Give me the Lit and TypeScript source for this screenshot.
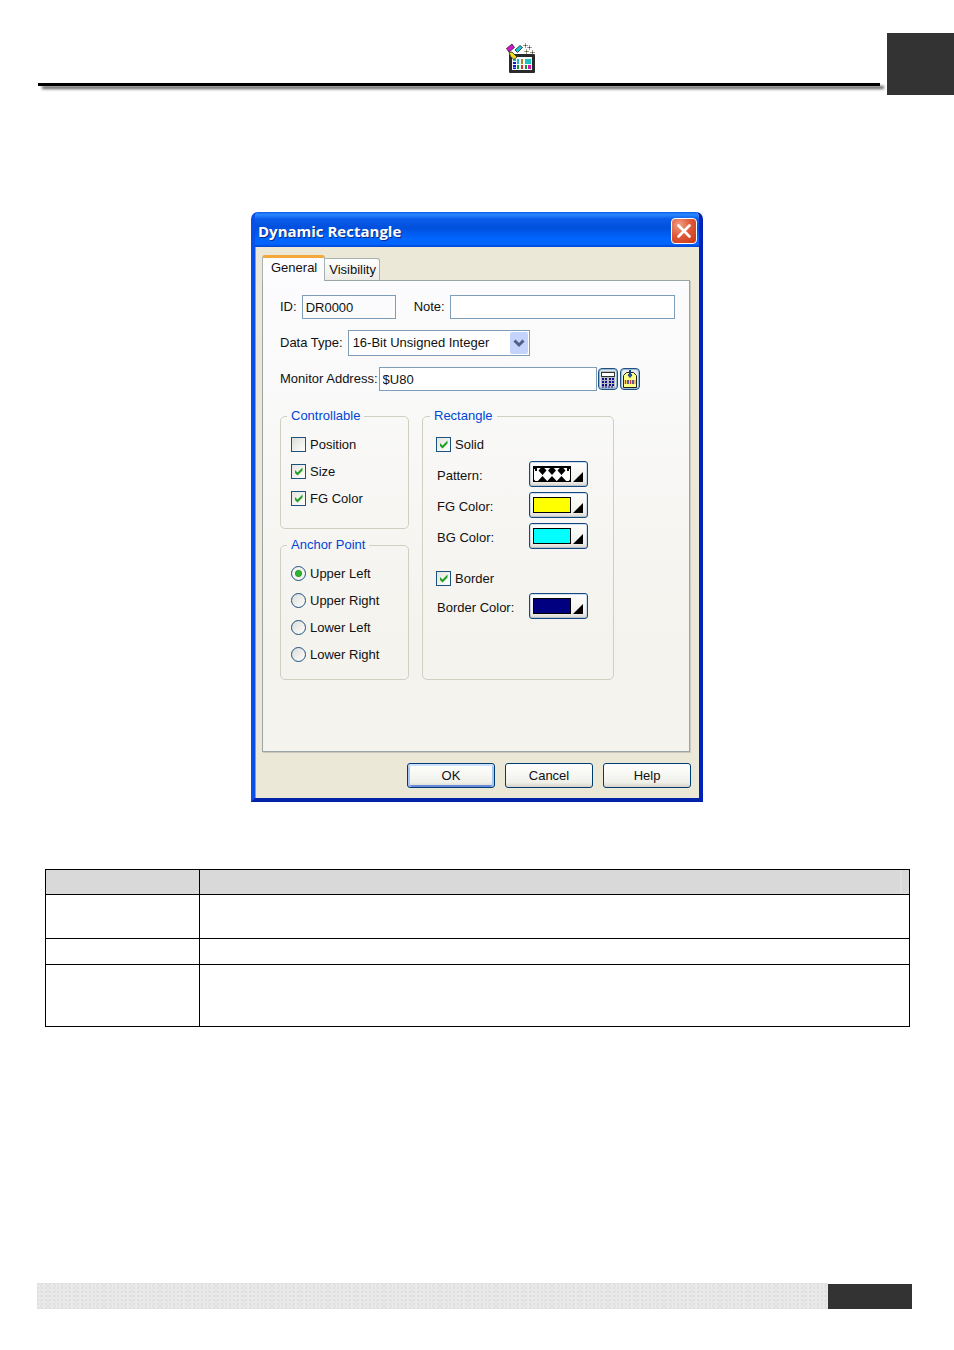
import { LitElement, html, css, svg } from "lit";
import { customElement, property } from "lit/decorators.js";
import { classMap } from "lit/directives/class-map.js";

/** Colour or pattern picker button: a swatch and a corner triangle. */
@customElement("swatch-button")
class SwatchButton extends LitElement {
  @property() label = "";
  @property() color = "";

  static styles = css`
    :host { display: block; }
    .swatch {
      width: 59px;
      height: 26px;
      padding: 0 0 0 3px;
      box-sizing: border-box;
      border: 1px solid #15487e;
      border-radius: 3px;
      background: linear-gradient(#ffffff, #f1f0eb 80%, #d9d5cb);
      box-shadow: inset 0 0 0 1px rgba(120, 160, 205, 0.35);
    }
    .art { display: block; }
  `;

  private pattern() {
    return svg`
      <rect x="0" y="1" width="38" height="16" fill="#fff"></rect>
      ${[9.5, 19, 28.5].map(
        (x) => svg`<path d="M${x} 1l4 4.500-4 4.500-4-4.500zM${x} 11l5.500 6h-11z" fill="#000"></path>`
      )}
      <path d="M0 1h38v3h-2v2h-2V3H4v3H2V4H0zM0 13l3 4H0zM38 13l-3 4h3z" fill="#000"></path>
      <rect x="0.5" y="1.5" width="37" height="15" fill="none" stroke="#000"></rect>`;
  }

  render() {
    return html`<button type="button" class="swatch" aria-label=${this.label}>
      <svg class="art" width="50" height="18" viewBox="0 0 50 18">
        ${this.color
          ? svg`<rect x="0.5" y="1.5" width="37" height="15" fill=${this.color} stroke="#000"></rect>`
          : this.pattern()}
        <path d="M50 7v10H40z" fill="#000"></path>
      </svg>
    </button>`;
  }
}

/** The "Dynamic Rectangle" property dialog. */
@customElement("property-dialog")
class PropertyDialog extends LitElement {
  static styles = css`
    :host {
      display: block;
      width: 100%;
      max-width: 452px;
      font: 13px/18px "Liberation Sans", Arial, sans-serif;
      color: #111;
    }
    button, input, select { font: inherit; color: inherit; box-sizing: border-box; margin: 0; }
    .dialog {
      background: #ebe8d7;
      border: 4px solid #0831d9;
      border-color: #0b4ee8 #0122b8 #0122a8 #0b4ee8;
      border-top: 0;
      border-radius: 7px 7px 0 0;
      overflow: hidden;
      box-shadow: inset 1px 0 #6da0f4;
    }
    .title-bar {
      display: flex;
      align-items: center;
      justify-content: space-between;
      height: 35px;
      margin: 0 -4px;
      padding: 2px 6px 0 7px;
      box-sizing: border-box;
      background: linear-gradient(#0a5fe8, #2b88ff 7%, #0a5cea 20%, #0050dc 45%, #0064ff 75%, #0064ff 92%, #0044cc);
    }
    .title {
      margin: 0;
      font: bold 15px/20px "Open Sans", "Noto Sans", sans-serif;
      color: #fff;
      text-shadow: 1px 1px #0a2a80;
    }
    .close {
      width: 26px;
      height: 26px;
      padding: 0;
      border: 1px solid #fff;
      border-radius: 4px;
      background: radial-gradient(circle at 30% 25%, #f0a084, #e0593a 45%, #c8350f);
    }
    .glyph { display: block; margin: auto; }
    .body { padding: 8px 9px 10px 7px; }
    .tabs { display: flex; align-items: flex-end; }
    .tab {
      height: 22px;
      padding: 0 3px 0 4px;
      border: 1px solid #a9b1b1;
      border-left: 0;
      border-bottom: 0;
      border-radius: 0 3px 0 0;
      background: linear-gradient(#fff, #ecebe5);
    }
    .tab.current {
      position: relative;
      height: 26px;
      margin-bottom: -1px;
      padding: 0 7px 3px 8px;
      border: 1px solid #a9b1b1;
      border-top: 3px solid #f5a83a;
      border-bottom: 0;
      border-radius: 3px 3px 0 0;
      background: #fcfcfe;
    }
    .panel {
      padding: 14px 14px 71px 17px;
      border: 1px solid #9aa4a6;
      box-shadow: 1px 1px #c9c9bd;
      background: linear-gradient(#fcfcfe, #f4f3ee 75%);
    }
    .line { display: flex; align-items: center; margin-bottom: 11px; }
    .field {
      height: 24px;
      padding: 0 3px;
      border: 1px solid #7f9db9;
      border-radius: 0;
      background: #fff;
      min-width: 0;
    }
    .id { width: 94px; margin-left: 5px; background: transparent; }
    .note-label { margin-left: 18px; }
    .note { flex: 1; margin-left: 5px; }
    .combo { position: relative; margin-left: 5px; }
    .select { display: block; appearance: none; width: 182px; height: 26px; padding: 0 4px; }
    .arrow { position: absolute; right: 2px; top: 2px; pointer-events: none; }
    .address { flex: 1; margin-left: 1px; }
    .tools { display: flex; gap: 2px; margin: 0 35px 0 1px; }
    .tool {
      width: 20px;
      height: 22px;
      padding: 0;
      border: 1px solid #1c5180;
      border-radius: 4px;
      background: #e3eaf0;
      box-shadow: inset 0 0 0 1px #9ab9d6;
    }
    .groups {
      display: grid;
      grid-template-columns: 129px 192px;
      gap: 7px 13px;
      padding-top: 5px;
    }
    .group {
      min-width: 0;
      margin: 0;
      padding: 6px 10px 11px;
      border: 1px solid #d0d0bf;
      border-radius: 5px;
    }
    .controllable { padding-bottom: 16px; }
    .rectangle { grid-column: 2; grid-row: 1 / span 2; padding-left: 13px; }
    .legend { margin-left: -4px; padding: 0 4px; color: #0046d5; }
    .rectangle .legend { margin-left: -6px; }
    .option { display: flex; align-items: center; gap: 4px; height: 27px; }
    .option.solid { margin-bottom: 2px; }
    .option.border { margin-top: 12px; }
    .mark {
      appearance: none;
      width: 15px;
      height: 15px;
      border: 1px solid #1c5180;
      background: linear-gradient(135deg, #dcdcd7, #fff);
    }
    .check:checked {
      background:
        url('data:image/svg+xml,<svg xmlns="http://www.w3.org/2000/svg" viewBox="0 0 13 13"><path d="M3 5v3l2.500 2.500L10.500 5.500v-3L5.500 7.500z" fill="%2321a121"/></svg>'),
        linear-gradient(135deg, #e4e4df, #fff);
    }
    .radio { border-radius: 50%; }
    .radio:checked { background: radial-gradient(circle, #31b431 0 2px, #21a121 3px, #f3f3f0 4px); }
    .picker {
      display: grid;
      grid-template-columns: 92px auto;
      align-items: center;
      height: 31px;
      padding-left: 1px;
    }
    .actions { display: flex; justify-content: flex-end; gap: 10px; padding-top: 11px; margin-right: -1px; }
    .action {
      width: 88px;
      height: 25px;
      padding: 0;
      border: 1px solid #003c74;
      border-radius: 3px;
      background: linear-gradient(#fff, #f0f0ea 80%, #d8d2c6);
    }
    .action.primary { box-shadow: inset 0 2px #cee0fb, inset 2px 0 #a9c4f4, inset -2px 0 #a9c4f4, inset 0 -2px #6a8ae0; }
  `;

  private option(kind: "checkbox" | "radio", text: string, checked: boolean, extra = "") {
    const marks = { mark: true, check: kind === "checkbox", radio: kind === "radio" };
    return html`<label class="option ${extra}">
      <input type=${kind} name=${kind === "radio" ? "anchor" : text} class=${classMap(marks)} .checked=${checked} />
      <span>${text}</span>
    </label>`;
  }

  private picker(text: string, color = "") {
    return html`<div class="picker">
      <span>${text}:</span>
      <swatch-button label=${text} color=${color}></swatch-button>
    </div>`;
  }

  render() {
    return html`<form class="dialog" @submit=${(e: Event) => e.preventDefault()}>
      <header class="title-bar">
        <h1 class="title">Dynamic Rectangle</h1>
        <button type="button" class="close" aria-label="Close">
          <svg class="glyph" width="24" height="24" viewBox="0 0 24 24">
            <path d="M6.5 6.5l11 11M17.5 6.5l-11 11" stroke="#fff" stroke-width="2.6" stroke-linecap="round"></path>
          </svg>
        </button>
      </header>
      <div class="body">
        <div class="tabs" role="tablist">
          <button type="button" role="tab" aria-selected="true" class="tab current">General</button>
          <button type="button" role="tab" aria-selected="false" class="tab">Visibility</button>
        </div>
        <section class="panel" role="tabpanel">
          <div class="line">
            <label for="id">ID:</label>
            <input id="id" class="field id" value="DR0000" readonly />
            <label class="note-label" for="note">Note:</label>
            <input id="note" class="field note" />
          </div>
          <div class="line">
            <label for="type">Data Type:</label>
            <div class="combo">
              <select id="type" class="field select">
                <option>16-Bit Unsigned Integer</option>
              </select>
              <svg class="arrow" width="18" height="22" viewBox="0 0 18 22">
                <rect width="18" height="22" rx="2" fill="#c3d3fb"></rect>
                <path d="M4.5 8.5l4.5 4.5 4.5-4.5" fill="none" stroke="#4d6185" stroke-width="3"></path>
              </svg>
            </div>
          </div>
          <div class="line">
            <label for="address">Monitor Address:</label>
            <input id="address" class="field address" value="$U80" />
            <div class="tools">
              <button type="button" class="tool" aria-label="Keypad">
                <svg class="glyph" width="18" height="20" viewBox="0 0 18 20">
                  <rect x="2" y="2" width="14" height="17" fill="#b9bcc0"></rect>
                  <rect x="2.5" y="3.5" width="13" height="4" fill="#fff" stroke="#333"></rect>
                  ${[9, 12, 15].map((y) =>
                    [3, 6, 10, 13].map(
                      (x) => svg`<rect x=${x} y=${y} width="2" height="2" fill="#10108c"></rect>`
                    )
                  )}
                  <path d="M3 18h12" stroke="#10108c" stroke-dasharray="2 1"></path>
                </svg>
              </button>
              <button type="button" class="tool" aria-label="Tag">
                <svg class="glyph" width="18" height="20" viewBox="0 0 18 20">
                  <path d="M5.5 3.5h7l3 3v12h-13v-12z" fill="#ffff86" stroke="#222"></path>
                  <path d="M9 1v4" stroke="#123f86" stroke-width="2"></path>
                  <path d="M7 6l2-1.500L11 6 9 8.500z" fill="#1d62b8" stroke="#123f86"></path>
                  <path d="M4.5 11v4M9.5 11v4" stroke="#d0392b" stroke-width="1.5"></path>
                  <path d="M7 11v4M12 11v4" stroke="#26269a" stroke-width="1.5"></path>
                  <path d="M14 11v4" stroke="#d0892b"></path>
                </svg>
              </button>
            </div>
          </div>
          <div class="groups">
            <fieldset class="group controllable">
              <legend class="legend">Controllable</legend>
              ${this.option("checkbox", "Position", false)}
              ${this.option("checkbox", "Size", true)}
              ${this.option("checkbox", "FG Color", true)}
            </fieldset>
            <fieldset class="group rectangle">
              <legend class="legend">Rectangle</legend>
              ${this.option("checkbox", "Solid", true, "solid")}
              ${this.picker("Pattern")}
              ${this.picker("FG Color", "#ffff00")}
              ${this.picker("BG Color", "#00ffff")}
              ${this.option("checkbox", "Border", true, "border")}
              ${this.picker("Border Color", "#000080")}
            </fieldset>
            <fieldset class="group">
              <legend class="legend">Anchor Point</legend>
              ${this.option("radio", "Upper Left", true)}
              ${this.option("radio", "Upper Right", false)}
              ${this.option("radio", "Lower Left", false)}
              ${this.option("radio", "Lower Right", false)}
            </fieldset>
          </div>
        </section>
        <div class="actions">
          <button type="submit" class="action primary">OK</button>
          <button type="button" class="action">Cancel</button>
          <button type="button" class="action">Help</button>
        </div>
      </div>
    </form>`;
  }
}

@customElement("app-root")
class AppRoot extends LitElement {
  static styles = css`
    :host { display: block; background: #fff; }
    .page {
      display: flex;
      flex-direction: column;
      min-height: 100vh;
      padding: 33px 0 41px;
      box-sizing: border-box;
    }
    .top { display: flex; gap: 7px; height: 62px; padding-left: 38px; }
    .banner { flex: 1; padding-top: 10px; }
    .logo { display: block; margin-left: 55.5%; }
    .rule {
      height: 3px;
      margin-top: 8px;
      background: #000;
      box-shadow: 4px 3px 3px rgba(50, 45, 45, 0.8);
    }
    .corner { width: 67px; background: #333; }
    .figure { display: flex; justify-content: center; padding: 117px 16px 67px; }
    .sheet-wrap { padding: 0 44px 0 45px; }
    .sheet { width: 100%; border-collapse: collapse; table-layout: fixed; }
    .cell { height: 43px; padding: 0; border: 1px solid #000; }
    .cell.head { height: 24px; background: #d9d9d9; }
    .cell.head.wide { background: linear-gradient(to left, #d9d9d9 8px, #e6e6e6 8px 9px, #d9d9d9 9px); }
    .cell.low { height: 25px; }
    .cell.tall { height: 61px; }
    .first { width: 154px; }
    .foot { display: flex; height: 26px; margin: auto 42px 0 37px; }
    .texture {
      flex: 1;
      background-color: #e9e9e9;
      background-image:
        radial-gradient(circle at 1px 1px, #dfdfdf 1px, transparent 1px),
        radial-gradient(circle at 4px 3px, #e1e1e1 1px, transparent 1px);
      background-size: 4px 4px, 7px 5px;
    }
    .number { width: 84px; height: 25px; margin-top: 1px; background: #333; }
  `;

  private logo() {
    return html`<svg class="logo" width="32" height="32" viewBox="0 0 32 32" aria-hidden="true">
      <rect x="4" y="11" width="26" height="19" rx="1" fill="#2a2a2a"></rect>
      <rect x="7" y="14" width="20" height="13" fill="#f2fafa"></rect>
      <path d="M8 16h3v2H8z" fill="#28b4c8"></path>
      <path d="M8 19h3v2H8zM8 22h3v2H8zM8 24.5h3V26H8z" fill="#1414d8"></path>
      <path d="M12 16h2v5h-2z" fill="#28b4c8"></path>
      <path d="M12 22h2v4h-2zM20 22h2v4h-2z" fill="#119a33"></path>
      <path d="M16 16h2v5h-2z" fill="#a58a20"></path>
      <path d="M16 22h2v4h-2z" fill="#d83030"></path>
      <path d="M20 16h6v5h-6z" fill="#1cc2c2"></path>
      <path d="M23 22h3v4h-3z" fill="#d214b4"></path>
      <path d="M1.500 5.500L7 1l2.500 3.500L4 9z" fill="#d414cc" stroke="#222" stroke-width="0.8"></path>
      <path d="M10 7l5-4.5 2.5 2L12.500 9.500z" fill="#18c8d4" stroke="#222" stroke-width="0.8"></path>
      <path d="M4 9.500l3-.5 5 5-3 2.500-3.500-3z" fill="#f0dc18" stroke="#222" stroke-width="0.8"></path>
      <path d="M18.500 2.500h4M20.500.5v4M22.500 4.500h4M24.500 2.500v4M19.500 8.500h4M21.500 6.500v4M25.500 9.500h4M27.500 7.500v4" stroke="#3c3c18" stroke-dasharray="1 0.500"></path>
    </svg>`;
  }

  render() {
    return html`<div class="page">
      <header class="top">
        <div class="banner">
          ${this.logo()}
          <div class="rule"></div>
        </div>
        <div class="corner"></div>
      </header>
      <main>
        <div class="figure"><property-dialog></property-dialog></div>
        <div class="sheet-wrap">
          <table class="sheet">
            <colgroup><col class="first" /><col /></colgroup>
            <thead><tr><th class="cell head"></th><th class="cell head wide"></th></tr></thead>
            <tbody>
              <tr><td class="cell"></td><td class="cell"></td></tr>
              <tr><td class="cell low"></td><td class="cell low"></td></tr>
              <tr><td class="cell tall"></td><td class="cell tall"></td></tr>
            </tbody>
          </table>
        </div>
      </main>
      <footer class="foot"><div class="texture"></div><div class="number"></div></footer>
    </div>`;
  }
}
